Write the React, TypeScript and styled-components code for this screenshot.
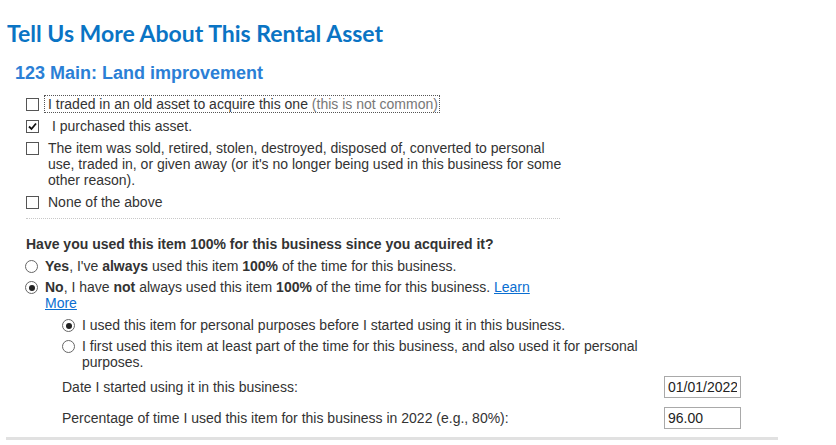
import React from "react";
import styled, { createGlobalStyle } from "styled-components";

const Global = createGlobalStyle`
  html, body { margin: 0; padding: 0; background: #fff; }
  body { font-family: "Liberation Sans", Arial, sans-serif; color: #333; }
`;

const Page = styled.div`
  width: 836px;
  height: 445px;
  overflow: hidden;
  padding: 18px 0 0 7px;
  box-sizing: border-box;
`;

const Title = styled.h1`
  margin: 0;
  font-family: Lato, "Open Sans", sans-serif;
  font-weight: 700;
  font-size: 23px;
  line-height: 30px;
  color: #0a74c4;
`;

const SubTitle = styled.h2`
  margin: 14px 0 0 8px;
  font-family: "Liberation Sans", Arial, sans-serif;
  font-weight: 700;
  font-size: 18px;
  line-height: 22px;
  color: #2b7fd6;
`;

const Section = styled.div<{ $width: number }>`
  margin-left: 19px;
  width: ${(p) => p.$width}px;
`;

const CheckList = styled.div`
  margin-top: 12px;
  display: flex;
  flex-direction: column;
  gap: 6px;
  padding-bottom: 8px;
  border-bottom: 1px dotted #c8c8c8;
`;

const CheckRow = styled.label`
  display: flex;
  align-items: flex-start;
  width: 545px;
  font-size: 14px;
  line-height: 16px;
`;

const Box = styled.span`
  flex: none;
  width: 11px;
  height: 11px;
  border: 1px solid #555;
  margin-top: 2px;
  margin-right: 9px;
  position: relative;
  background: #fff;
`;

const Tick = styled.svg`
  position: absolute;
  left: 1px;
  top: 1px;
`;

const LabelText = styled.span<{ $focus?: boolean; $indent?: number }>`
  padding-left: ${(p) => p.$indent ?? 0}px;
  ${(p) =>
    p.$focus
      ? "outline: 1px dotted #555; margin-left: -3px; padding: 0 1px 0 3px;"
      : ""}
`;

const Muted = styled.span`
  color: #777;
`;

const Question = styled.div`
  margin-top: 17px;
  font-size: 14px;
  line-height: 16px;
  font-weight: 700;
`;

const RadioList = styled.div<{ $indent?: number }>`
  display: flex;
  flex-direction: column;
  gap: 5px;
  margin-top: 6px;
  padding-left: ${(p) => p.$indent ?? 0}px;
`;

const RadioRow = styled.label`
  display: flex;
  align-items: flex-start;
  font-size: 14px;
  line-height: 16px;
`;

const Dot = styled.span<{ $on?: boolean }>`
  flex: none;
  width: 11px;
  height: 11px;
  border: 1px solid #666;
  border-radius: 50%;
  margin-top: 2px;
  margin-right: 7px;
  margin-left: -1px;
  position: relative;
  &::after {
    content: "";
    display: ${(p) => (p.$on ? "block" : "none")};
    position: absolute;
    left: 2.5px;
    top: 2.5px;
    width: 6px;
    height: 6px;
    border-radius: 50%;
    background: #222;
  }
`;

const Bold = styled.b`
  font-weight: 700;
`;

const Link = styled.a`
  color: #0a6ed1;
  text-decoration: underline;
`;

const Fields = styled.div`
  box-sizing: border-box;
  margin-top: 6px;
  padding-left: 55px;
  width: 734px;
  display: flex;
  flex-direction: column;
  gap: 9px;
`;

const FieldRow = styled.div`
  display: flex;
  align-items: center;
  justify-content: space-between;
  font-size: 14px;
`;

const Input = styled.input`
  box-sizing: border-box;
  width: 77px;
  height: 22px;
  border: 1px solid #a9a9a9;
  padding: 1px 3px;
  font-family: "Liberation Sans", Arial, sans-serif;
  font-size: 14px;
  color: #222;
  outline: none;
`;

const Rule = styled.div`
  margin: 8px 0 0 -1px;
  width: 772px;
  height: 3px;
  background: #e1e1e1;
`;

export default function App() {
  return (
    <Page>
      <Global />
      <Title>Tell Us More About This Rental Asset</Title>
      <SubTitle>123 Main: Land improvement</SubTitle>
      <Section $width={534}>
        <CheckList>
          <CheckRow>
            <Box />
            <LabelText $focus>
              I traded in an old asset to acquire this one <Muted>(this is not common)</Muted>
            </LabelText>
          </CheckRow>
          <CheckRow>
            <Box>
              <Tick width="9" height="9" viewBox="0 0 9 9">
                <path d="M1 4.5 L3.5 7 L8 1.5" fill="none" stroke="#111" strokeWidth="1.8" />
              </Tick>
            </Box>
            <LabelText $indent={4}>I purchased this asset.</LabelText>
          </CheckRow>
          <CheckRow>
            <Box />
            <LabelText>
              The item was sold, retired, stolen, destroyed, disposed of, converted to personal use,
              traded in, or given away (or it's no longer being used in this business for some other
              reason).
            </LabelText>
          </CheckRow>
          <CheckRow>
            <Box />
            <LabelText>None of the above</LabelText>
          </CheckRow>
        </CheckList>
      </Section>
      <Section $width={520}>
        <Question>Have you used this item 100% for this business since you acquired it?</Question>
        <RadioList>
          <RadioRow>
            <Dot />
            <span>
              <Bold>Yes</Bold>, I've <Bold>always</Bold> used this item <Bold>100%</Bold> of the time
              for this business.
            </span>
          </RadioRow>
          <RadioRow>
            <Dot $on />
            <span>
              <Bold>No</Bold>, I have <Bold>not</Bold> always used this item <Bold>100%</Bold> of the
              time for this business. <Link href="#">Learn More</Link>
            </span>
          </RadioRow>
        </RadioList>
      </Section>
      <Section $width={620}>
        <RadioList $indent={37}>
          <RadioRow>
            <Dot $on />
            <span>I used this item for personal purposes before I started using it in this business.</span>
          </RadioRow>
          <RadioRow>
            <Dot />
            <span>
              I first used this item at least part of the time for this business, and also used it
              for personal purposes.
            </span>
          </RadioRow>
        </RadioList>
      </Section>
      <Fields>
        <FieldRow>
          <span>Date I started using it in this business:</span>
          <Input defaultValue="01/01/2022" />
        </FieldRow>
        <FieldRow>
          <span>Percentage of time I used this item for this business in 2022 (e.g., 80%):</span>
          <Input defaultValue="96.00" />
        </FieldRow>
      </Fields>
      <Rule />
    </Page>
  );
}
